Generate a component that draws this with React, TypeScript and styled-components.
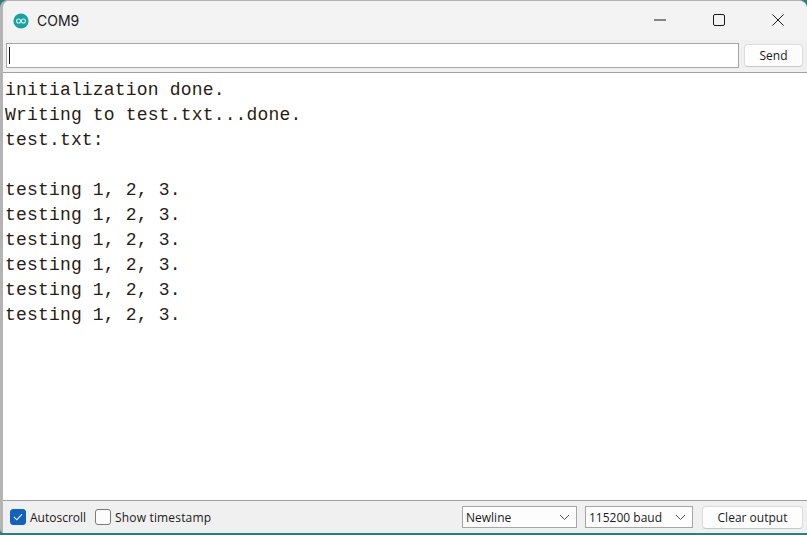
import React from "react";
import styled, { createGlobalStyle } from "styled-components";

const Global = createGlobalStyle`
  html, body { margin: 0; padding: 0; background: #1f7f7a; }
  body { width: 807px; height: 535px; overflow: hidden; font-family: "Open Sans", "Noto Sans", sans-serif; }
`;
const Screen = styled.div`
  width: 807px; height: 535px; background: #2b7f7c; display: flex; flex-direction: column;
  overflow: hidden;
`;
const Frame = styled.div`
  width: 807px; height: 533px; background: #f0f0f0; box-sizing: border-box;
  border-top: 1px solid #b4b4b4; border-left: 3px solid #b4b4b4;
  border-top-left-radius: 8px; border-top-right-radius: 8px;
  border-bottom-left-radius: 4px;
  display: flex; flex-direction: column;
`;
const TitleBar = styled.div`
  height: 39px; background: #f3f3f3; display: flex; align-items: center; padding-left: 10px;
  border-top-left-radius: 8px; border-top-right-radius: 8px; flex: none;
`;
const TitleText = styled.span`
  font-family: "Inter", "Open Sans", sans-serif; font-size: 14px; color: #1a1a1a; margin-left: 8px;
`;
const WinControls = styled.div`margin-left: auto; display: flex; height: 100%; box-sizing: border-box; padding-bottom: 2px;`;
const WinBtn = styled.div`width: 59px; display: flex; align-items: center; justify-content: center; color: #1a1a1a;`;
const InputRow = styled.div`
  height: 33px; flex: none; background: #f0f0f0; box-sizing: border-box; display: flex; align-items: center;
  padding: 0 4px 1px 3px; gap: 5px; border-bottom: 1px solid #a0a0a0;
`;
const InputBox = styled.div`
  flex: 1; height: 25px; background: #fff; box-sizing: border-box; border: 1px solid #a6a6a6; display: flex; align-items: center; padding-left: 2px;
`;
const Caret = styled.span`display: block; width: 1px; height: 17px; background: #111;`;
const Btn = styled.button<{ $w: number }>`
  width: ${p => p.$w}px; height: 23px; box-sizing: border-box; background: #fdfdfd; border: 1px solid #dcdcdc; border-bottom-color: #c8c8c8; border-radius: 4px;
  font-family: "Open Sans", "Noto Sans", sans-serif; font-size: 12px; color: #1a1a1a; padding: 0; flex: none;
`;
const Output = styled.div`
  flex: 1; background: #fff; padding: 5px 0 0 2px; box-sizing: border-box;
  font-family: "Liberation Mono", "Courier New", monospace; font-size: 18px; line-height: 25px; color: #2a1c14; white-space: pre;
  letter-spacing: 0.18px;
`;
const Line = styled.div`height: 25px;`;
const Footer = styled.div`
  height: 33px; flex: none; background: #f0f0f0; border-top: 1px solid #a0a0a0; display: flex; align-items: center; box-sizing: border-box;
  padding: 0 4px 0 7px; font-family: "Open Sans", "Noto Sans", sans-serif; font-size: 12px; color: #1a1a1a;
`;
const Check = styled.span<{ $on?: boolean }>`
  width: 16px; height: 16px; box-sizing: border-box; border-radius: 3px; display: flex; align-items: center; justify-content: center; flex: none;
  background: ${p => (p.$on ? "#0f62c0" : "#fcfcfc")}; border: 1px solid ${p => (p.$on ? "#0f62c0" : "#7a7a7a")};
`;
const CheckLabel = styled.span<{ $gap: number; $track?: number }>`
  margin: 0 ${p => p.$gap}px 0 4px; letter-spacing: ${p => p.$track ?? 0}px;
`;
const Spacer = styled.div`flex: 1;`;
const Select = styled.div<{ $w: number; $mr: number }>`
  width: ${p => p.$w}px; margin-right: ${p => p.$mr}px; height: 22px; box-sizing: border-box; background: #fdfdfd; border: 1px solid #a6a6a6; display: flex; align-items: center; padding: 0 6px 0 3px; justify-content: space-between; flex: none;
`;

const Logo = () => (
  <svg width="16" height="16" viewBox="0 0 16 16">
    <circle cx="8" cy="8" r="7.6" fill="#17a2a4" />
    <g fill="none" stroke="#d8f2f2" strokeWidth="1.1">
      <circle cx="5.6" cy="8" r="2" />
      <circle cx="10.4" cy="8" r="2" />
    </g>
  </svg>
);
const Chevron = () => (
  <svg width="11" height="7" viewBox="0 0 11 7">
    <path d="M1 1l4.5 4.5L10 1" fill="none" stroke="#555" strokeWidth="1" />
  </svg>
);

const lines = [
  "initialization done.", "Writing to test.txt...done.", "test.txt:", "",
  "testing 1, 2, 3.", "testing 1, 2, 3.", "testing 1, 2, 3.", "testing 1, 2, 3.", "testing 1, 2, 3.", "testing 1, 2, 3.",
];

export default function App() {
  return (
    <Screen>
      <Global />
      <Frame>
        <TitleBar>
          <Logo />
          <TitleText>COM9</TitleText>
          <WinControls>
            <WinBtn>
              <svg width="12" height="2" viewBox="0 0 12 2"><path d="M0 1h12" stroke="#1a1a1a" strokeWidth="1" /></svg>
            </WinBtn>
            <WinBtn>
              <svg width="12" height="12" viewBox="0 0 12 12"><rect x=".5" y=".5" width="11" height="11" rx="1.5" fill="none" stroke="#1a1a1a" /></svg>
            </WinBtn>
            <WinBtn>
              <svg width="12" height="12" viewBox="0 0 12 12"><path d="M.5.5l11 11M11.500.5l-11 11" stroke="#1a1a1a" strokeWidth="1" /></svg>
            </WinBtn>
          </WinControls>
        </TitleBar>
        <InputRow>
          <InputBox><Caret /></InputBox>
          <Btn $w={59}>Send</Btn>
        </InputRow>
        <Output>
          {lines.map((l, i) => <Line key={i}>{l}</Line>)}
        </Output>
        <Footer>
          <Check $on>
            <svg width="10" height="8" viewBox="0 0 10 8"><path d="M1 4l2.800 2.800L9 1.200" fill="none" stroke="#fff" strokeWidth="1.100" /></svg>
          </Check>
          <CheckLabel $gap={9}>Autoscroll</CheckLabel>
          <Check />
          <CheckLabel $gap={0} $track={0.16}>Show timestamp</CheckLabel>
          <Spacer />
          <Select $w={115} $mr={8}><span>Newline</span><Chevron /></Select>
          <Select $w={108} $mr={9}><span>115200 baud</span><Chevron /></Select>
          <Btn $w={101}>Clear output</Btn>
        </Footer>
      </Frame>
    </Screen>
  );
}
